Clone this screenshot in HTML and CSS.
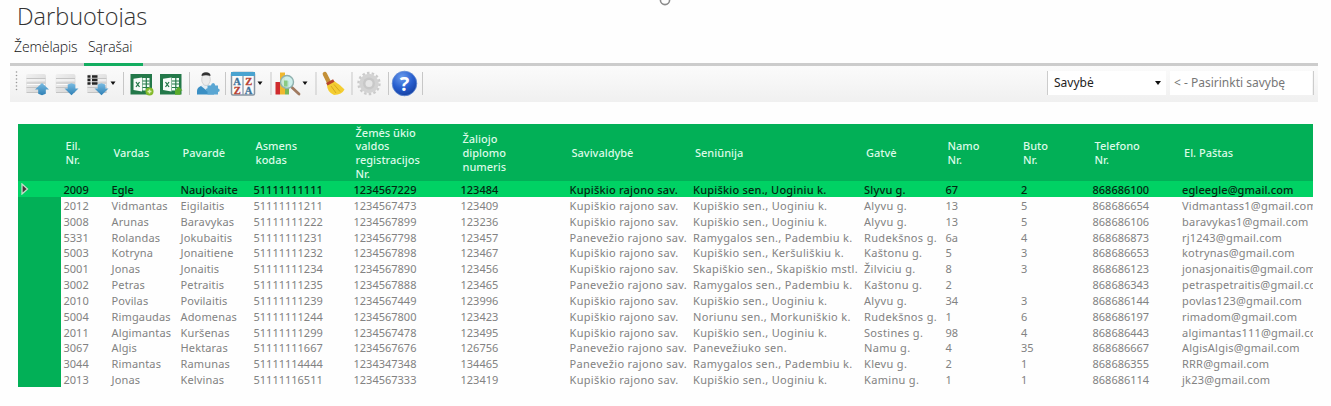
FILE: index.html
```html
<!DOCTYPE html>
<html lang="lt">
<head>
<meta charset="utf-8">
<title>Darbuotojas</title>
<link rel="stylesheet" href="styles.css">
</head>
<body>
<main class="window">
<svg class="ring" width="14" height="6" viewBox="0 0 14 6"><circle cx="7" cy="0" r="4.600" fill="none" stroke="#8b8b8b" stroke-width="1.600"/></svg>
<h1 class="title">Darbuotojas</h1>
<nav class="tabs"><a class="tab tab-map">Žemėlapis</a><a class="tab tab-lists">Sąrašai</a></nav>
<div class="rule"><i class="rule-active"></i></div>
<div class="toolbar">
<svg class="icons" width="430" height="36" viewBox="0 0 430 36">
<defs>
<linearGradient id="blue" x1="0" y1="0" x2="0" y2="1"><stop offset="0" stop-color="#79bce3"/><stop offset="1" stop-color="#2f80b5"/></linearGradient>
<linearGradient id="sheet" x1="0" y1="0" x2="1" y2="1"><stop offset="0" stop-color="#f1f1f1"/><stop offset="1" stop-color="#d4d4d4"/></linearGradient>
<radialGradient id="help" cx=".4" cy=".25" r=".8"><stop offset="0" stop-color="#6c9cec"/><stop offset=".55" stop-color="#285fcf"/><stop offset="1" stop-color="#143d9d"/></radialGradient>
<g id="grid"><rect x="0" y="0" width="20" height="19" rx="2" fill="url(#sheet)"/><path d="M.5 4.500h19M.5 9h19M.5 13.500h19M.5 18.500h19" stroke="#c4c4c4" stroke-width="1"/><path d="M1 6h18M1 10.500h18" stroke="#fbfbfb" stroke-width="1"/></g>
<g id="excel"><rect width="21.500" height="20.500" fill="#237849"/><path d="M12 4h7v12.500h-7z" fill="#f3fbf6"/><path d="M12 7h7M12 10h7M12 13.500h7M15.800 4v12.500" stroke="#237849" stroke-width="1.200"/><path d="M3 4.800L11.500 3.500v14L3 16z" fill="#f7fbf8"/><path d="M5.500 8l3.500 5M9 8l-3.500 5" stroke="#237849" stroke-width="1.300"/></g>
</defs>
<g fill="#999"><circle cx="6.500" cy="6" r=".8"/><circle cx="6.500" cy="9.500" r=".8"/><circle cx="6.500" cy="13" r=".8"/><circle cx="6.500" cy="16.500" r=".8"/><circle cx="6.500" cy="20" r=".8"/><circle cx="6.500" cy="23.500" r=".8"/></g>
<use href="#grid" x="16" y="8"/><path d="M32 17l7 6.500h-3.200v4.200l-3.800 1.500-3.800-1.500v-4.200h-3.200z" fill="url(#blue)"/>
<use href="#grid" x="45.500" y="8"/><path d="M57.700 18.500l3.800-1.200 3.800 1.200v4h3.200l-7 6.700-7-6.700h3.200z" fill="url(#blue)"/>
<use href="#grid" x="77" y="8"/><path d="M77.500 10.500h3m1.500 0h5.500M77.500 14h3m1.500 0h5.500M77.500 17.500h3m1.500 0h5.500" stroke="#252525" stroke-width="2.300"/><path d="M87.700 18.500l3.800-1.200 3.800 1.200v4h3.200l-7 6.700-7-6.700h3.200z" fill="url(#blue)"/><path d="M100.500 15.500h5l-2.500 3.500z" fill="#111"/>
<path d="M113.500 6v23M179.500 6v23M215.500 6v23M261 6v23M306 6v23M342 6v23M378.500 6v23M412.500 6v23" stroke="#c7c7c7"/>
<use href="#excel" x="120.500" y="8"/><circle cx="139.500" cy="25.500" r="4" fill="#83ba2b"/><path d="M137.500 25.500h4M139.500 23.500v4" stroke="#dff2b6" stroke-width="1.500"/>
<use href="#excel" x="150" y="8"/><path d="M168.500 20.500l4 4-2 .2v4h-5.500v-4z" fill="#5aab2a"/>
<path d="M187 28.500v-3.500q0-4.500 6-5.500h6q5 .5 5 5.500v3.500z" fill="#3a8fc4"/><path d="M191 20l2.500-2h5l3 2-5.500 4z" fill="#e3edf3"/><ellipse cx="196" cy="13.500" rx="4.300" ry="6" fill="#ececec" stroke="#b5b5b5" stroke-width=".5"/><path d="M191.500 10Q191.500 6.300 196 6.300t4.500 3.700q-4.500-1.700-9 0z" fill="#333"/><path d="M197.500 19.500h3.500q.3-2.500 2.200-2.500t2 2.500h2.800v3q1.700 0 1.700 1.700t-1.700 1.800v2.500h-10.500v-3q-1.800-.2-1.800-1.700t1.800-1.600z" fill="#5aa6d3"/>
<g><rect x="221.500" y="6.500" width="23" height="22.500" rx="1.500" fill="#fafafa" stroke="#8695a3" stroke-width="1.500"/><path d="M221 6h24v4H221z" fill="#4aa3d0"/><path d="M233 10v19" stroke="#8b9eaf" stroke-width="1.300"/><g font-family="Liberation Serif" font-size="10.500" font-weight="bold" stroke-width=".3"><text x="223.300" y="19" fill="#3f739b" stroke="#3f739b">A</text><text x="223.800" y="28" fill="#b84132" stroke="#b84132">Z</text><text x="235.300" y="19" fill="#b84132" stroke="#b84132">Z</text><text x="234.800" y="28" fill="#3f739b" stroke="#3f739b">A</text></g></g>
<path d="M247.500 15.500h5l-2.500 3.500zM292.500 15.500h5l-2.500 3.500z" fill="#111"/>
<path d="M265.500 16h4.500v12.500h-4.500z" fill="#cf2b2d"/><path d="M270 6.500h5v22h-5z" fill="#f0b82e"/><path d="M275 15h4v13.500h-4z" fill="#78b758"/><path d="M282 21.500l7 6.500" stroke="#a07a60" stroke-width="2.800" stroke-linecap="round"/><circle cx="277" cy="16" r="6.500" fill="#c7eee9" fill-opacity=".88" stroke="#8fb0ae" stroke-width="1.400"/><path d="M274 14.500h3.500v6h-3.500z" fill="#8acb83"/>
<path d="M314.800 8l4.500 9" stroke="#c39038" stroke-width="4.300" stroke-linecap="round"/><path d="M317 18.500l7-3.500q6 3.500 10.500 8.500-2.500 5-10.500 5.500-7-3-7-10.500z" fill="#f4cd31"/><path d="M316.800 18.300l7-3.800" stroke="#b74529" stroke-width="3"/><path d="M321 20l5 7M324 18.500l6 7" stroke="#d7a820"/>
<circle cx="359" cy="17.500" r="10.500" fill="none" stroke="#cbcbcb" stroke-width="2.400" stroke-dasharray="2.500 2.213"/><circle cx="359" cy="17.500" r="9.700" fill="#d3d3d3"/><circle cx="359" cy="17.500" r="6" fill="#c8c8c8"/><circle cx="359" cy="17.500" r="3.500" fill="#e6e6e6"/>
<circle cx="394.500" cy="17.500" r="12.300" fill="url(#help)" stroke="#638bd3" stroke-width=".8"/><text x="394.500" y="24.500" text-anchor="middle" fill="#fff" font-family="Open Sans" font-weight="bold" font-size="20">?</text>
</svg>
<div class="filter"><div class="select"><span>Savybė</span><svg width="6" height="4"><path d="M0 0h6L3 4z" fill="#111"/></svg></div><div class="search">&lt; - Pasirinkti savybę</div></div>
</div>
<section class="table">
<div class="row head"><span></span><span>Eil.<br>Nr.</span><span>Vardas</span><span>Pavardė</span><span>Asmens<br>kodas</span><span>Žemės ūkio<br>valdos<br>registracijos<br>Nr.</span><span>Žaliojo<br>diplomo<br>numeris</span><span>Savivaldybė</span><span>Seniūnija</span><span>Gatvė</span><span>Namo<br>Nr.</span><span>Buto<br>Nr.</span><span>Telefono<br>Nr.</span><span>El. Paštas</span></div>
<div class="row selected"><span class="mark"><svg width="10" height="12" viewBox="0 0 10 12"><path d="M2 1l5.500 5L2 11z" fill="#4a3038" stroke="#c2ddc9" stroke-width="1.300"/></svg></span><span>2009</span><span>Egle</span><span>Naujokaite</span><span>51111111111</span><span>1234567229</span><span>123484</span><span class="wide">Kupiškio rajono sav.</span><span class="wide">Kupiškio sen., Uoginiu k.</span><span class="wide">Slyvu g.</span><span>67</span><span>2</span><span>868686100</span><span class="mail">egleegle@gmail.com</span></div>
<div class="row"><span class="mark"></span><span>2012</span><span class="name">Vidmantas</span><span class="name">Eigilaitis</span><span>51111111211</span><span>1234567473</span><span>123409</span><span class="wide">Kupiškio rajono sav.</span><span class="wide">Kupiškio sen., Uoginiu k.</span><span class="wide">Alyvu g.</span><span>13</span><span>5</span><span>868686654</span><span class="mail">Vidmantass1@gmail.com</span></div>
<div class="row"><span class="mark"></span><span>3008</span><span class="name">Arunas</span><span class="name">Baravykas</span><span>51111111222</span><span>1234567899</span><span>123236</span><span class="wide">Kupiškio rajono sav.</span><span class="wide">Kupiškio sen., Uoginiu k.</span><span class="wide">Alyvu g.</span><span>13</span><span>5</span><span>868686106</span><span class="mail">baravykas1@gmail.com</span></div>
<div class="row"><span class="mark"></span><span>5331</span><span class="name">Rolandas</span><span class="name">Jokubaitis</span><span>51111111231</span><span>1234567798</span><span>123457</span><span class="wide">Panevežio rajono sav.</span><span class="wide">Ramygalos sen., Padembiu k.</span><span class="wide">Rudekšnos g.</span><span>6a</span><span>4</span><span>868686873</span><span class="mail">rj1243@gmail.com</span></div>
<div class="row"><span class="mark"></span><span>5003</span><span class="name">Kotryna</span><span class="name">Jonaitiene</span><span>51111111232</span><span>1234567898</span><span>123467</span><span class="wide">Kupiškio rajono sav.</span><span class="wide">Kupiškio sen., Keršuliškiu k.</span><span class="wide">Kaštonu g.</span><span>5</span><span>3</span><span>868686653</span><span class="mail">kotrynas@gmail.com</span></div>
<div class="row"><span class="mark"></span><span>5001</span><span class="name">Jonas</span><span class="name">Jonaitis</span><span>51111111234</span><span>1234567890</span><span>123456</span><span class="wide">Kupiškio rajono sav.</span><span class="wide">Skapiškio sen., Skapiškio mstl.</span><span class="wide">Žilviciu g.</span><span>8</span><span>3</span><span>868686123</span><span class="mail">jonasjonaitis@gmail.com</span></div>
<div class="row"><span class="mark"></span><span>3002</span><span class="name">Petras</span><span class="name">Petraitis</span><span>51111111235</span><span>1234567888</span><span>123465</span><span class="wide">Panevežio rajono sav.</span><span class="wide">Ramygalos sen., Padembiu k.</span><span class="wide">Kaštonu g.</span><span>2</span><span></span><span>868686343</span><span class="mail">petraspetraitis@gmail.com</span></div>
<div class="row"><span class="mark"></span><span>2010</span><span class="name">Povilas</span><span class="name">Povilaitis</span><span>51111111239</span><span>1234567449</span><span>123996</span><span class="wide">Kupiškio rajono sav.</span><span class="wide">Kupiškio sen., Uoginiu k.</span><span class="wide">Alyvu g.</span><span>34</span><span>3</span><span>868686144</span><span class="mail">povlas123@gmail.com</span></div>
<div class="row"><span class="mark"></span><span>5004</span><span class="name">Rimgaudas</span><span class="name">Adomenas</span><span>51111111244</span><span>1234567800</span><span>123423</span><span class="wide">Kupiškio rajono sav.</span><span class="wide">Noriunu sen., Morkuniškio k.</span><span class="wide">Rudekšnos g.</span><span>1</span><span>6</span><span>868686197</span><span class="mail">rimadom@gmail.com</span></div>
<div class="row"><span class="mark"></span><span>2011</span><span class="name">Algimantas</span><span class="name">Kuršenas</span><span>51111111299</span><span>1234567478</span><span>123495</span><span class="wide">Kupiškio rajono sav.</span><span class="wide">Kupiškio sen., Uoginiu k.</span><span class="wide">Sostines g.</span><span>98</span><span>4</span><span>868686443</span><span class="mail">algimantas111@gmail.com</span></div>
<div class="row"><span class="mark"></span><span>3067</span><span class="name">Algis</span><span class="name">Hektaras</span><span>51111111667</span><span>1234567676</span><span>126756</span><span class="wide">Panevežio rajono sav.</span><span class="wide">Panevežiuko sen.</span><span class="wide">Namu g.</span><span>4</span><span>35</span><span>868686667</span><span class="mail">AlgisAlgis@gmail.com</span></div>
<div class="row"><span class="mark"></span><span>3044</span><span class="name">Rimantas</span><span class="name">Ramunas</span><span>51111114444</span><span>1234347348</span><span>134465</span><span class="wide">Panevežio rajono sav.</span><span class="wide">Ramygalos sen., Padembiu k.</span><span class="wide">Klevu g.</span><span>2</span><span>1</span><span>868686355</span><span class="mail">RRR@gmail.com</span></div>
<div class="row"><span class="mark"></span><span>2013</span><span class="name">Jonas</span><span class="name">Kelvinas</span><span>51111116511</span><span>1234567333</span><span>123419</span><span class="wide">Kupiškio rajono sav.</span><span class="wide">Kupiškio sen., Uoginiu k.</span><span class="wide">Kaminu g.</span><span>1</span><span>1</span><span>868686114</span><span class="mail">jk23@gmail.com</span></div>
</section>
</main>
</body>
</html>
```

FILE: styles.css
```css
* { box-sizing: border-box; }
body { margin: 0; background: #fefefe; font-family: "Noto Sans", "Open Sans", sans-serif; }
.window { position: relative; width: 1331px; height: 406px; overflow: hidden; }
.ring { position: absolute; left: 658px; top: 0; }
.title { margin: 0 0 0 17px; height: 27px; line-height: 33px; font-family: "Open Sans", sans-serif; font-size: 23.5px; font-weight: 300; color: #333; overflow: hidden; }
.tabs { height: 36px; padding: 10px 0 0 14px; display: flex; gap: 11px; font-family: "Open Sans", sans-serif; font-size: 14px; font-weight: 300; line-height: 20px; letter-spacing: -.1px; color: #111; }
.tab-map { width: 63px; }
.rule { height: 3px; margin: 0 13px 0 10px; background: #ccc; }
.rule-active { display: block; width: 59px; height: 3px; margin-left: 74px; background: #13ad60; }
.toolbar { height: 36px; margin: 0 13px 0 10px; display: flex; justify-content: space-between; background: linear-gradient(#fbfbfb, #f0f0f0); }
.filter { display: flex; gap: 4px; height: 24px; margin: 5px 4px 0 0; padding-right: 1px; border-left: 1px solid #ccc; border-right: 1px solid #ccc; font-size: 12px; line-height: 24px; }
.select { width: 118px; padding: 0 5px 0 6px; display: flex; justify-content: space-between; align-items: center; background: #fff; color: #222; }
.search { width: 142px; padding-left: 4px; background: #fff; color: #777; white-space: nowrap; }
.table { width: 1295px; margin: 22px 0 0 17.5px; overflow: hidden; font-size: 11px; }
.row { display: grid; grid-template-columns: 43px 48px 69px 73px 100px 107px 109px 123.5px 171px 81.5px 75.5px 71.5px 89.5px 133.5px; height: 15.84px; line-height: 17px; color: #828282; white-space: nowrap; }
.row > span:not(:first-child) { padding-left: 3px; min-width: 0; }
.name { letter-spacing: .15px; }
.wide { letter-spacing: .33px; }
.mail { letter-spacing: .22px; }
.mark { background: #02b057; }
.head { height: 57px; background: #02b057; color: #dcfae7; align-items: center; line-height: 13.7px; font-weight: 500; padding-top: 1px; }
.head > span:not(:first-child) { padding-left: 5px; }
.selected { height: 16px; background: #00d264; color: #052611; font-weight: 500; }
.selected .wide { letter-spacing: .2px; }
.selected .mail { letter-spacing: .1px; }
.selected .mark { padding: 2px 0 0 2px; line-height: 0; background: transparent; }
```
